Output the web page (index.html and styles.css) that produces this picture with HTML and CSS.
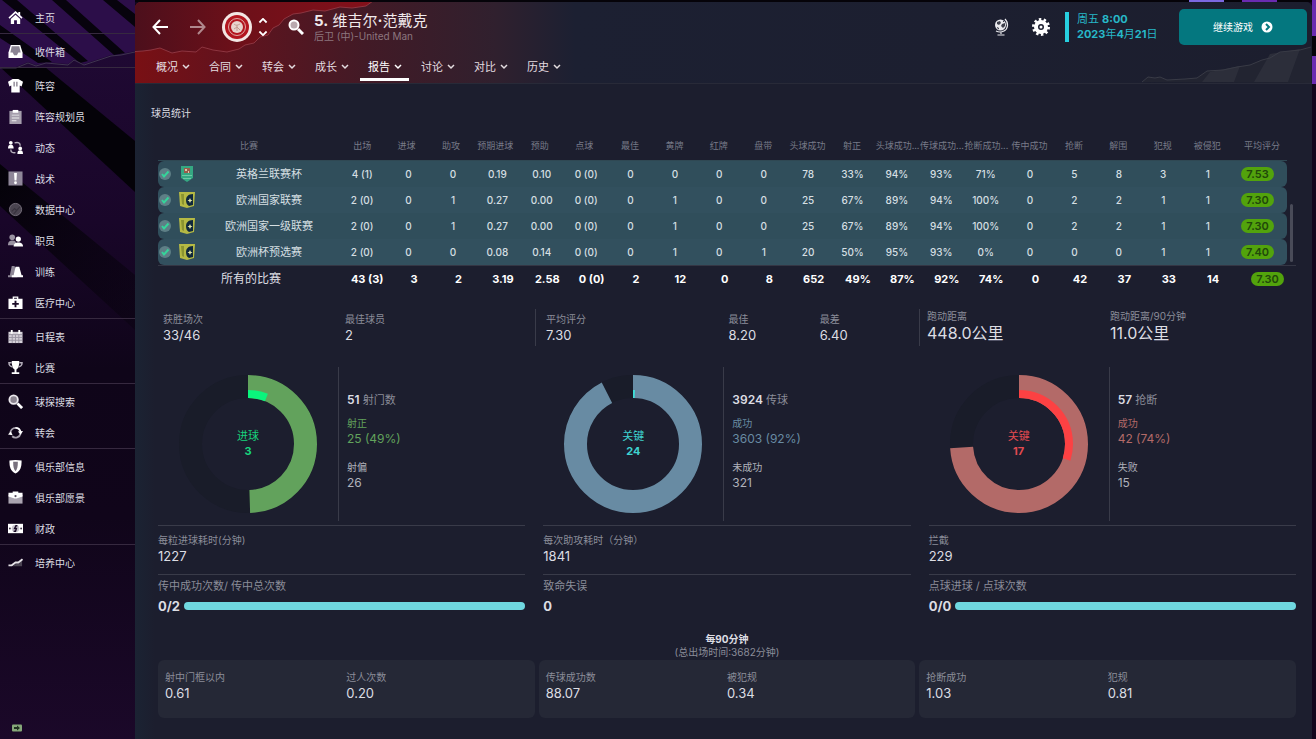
FILE: index.html
```html
<!DOCTYPE html>
<html lang="zh-CN">
<head>
  <meta charset="UTF-8" />
  <title>球员统计</title>
  <link rel="stylesheet" href="styles.css">
</head>
<body>
  <!-- Sidebar -->
  <aside class="sidebar">
    <svg class="sidebar-art" viewBox="0 0 135 739" preserveAspectRatio="none" aria-hidden="true">
      <defs>
        <linearGradient id="side-bg" x1="0" y1="0" x2="0" y2="1">
          <stop offset="0" stop-color="#210a36" />
          <stop offset=".3" stop-color="#190629" />
          <stop offset=".5" stop-color="#0f0519" />
          <stop offset=".7" stop-color="#10051a" />
          <stop offset="1" stop-color="#1b0829" />
        </linearGradient>
        <linearGradient id="side-fade" x1="0" y1="0" x2="1" y2="1">
          <stop offset="0" stop-color="#040208" />
          <stop offset="1" stop-color="#040208" stop-opacity=".3" />
        </linearGradient>
      </defs>
      <path fill="url(#side-bg)" d="M0 0h135v739H0z" />
      <path fill="#2c0e49" d="M0 0h135v51l-14 3-10 1-18 6-9 3-10-5-6 5-22-2-10 3-8-3-12 5H0z" />
      <path fill="#07030d" d="M0 25 52 62 38 63 0 38zM2 0h15l71 61-8 2zM52 0h14l59 53-11 2zM103 0h14l18 14v13z" />
      <path fill="#040208" d="M0 67 45 67 135 141v51z" />
      <path fill="url(#side-fade)" d="M0 164 135 275v55L0 206z" />
      <path fill="none" stroke="#3f3450" stroke-width="1" d="M0 68h16l12-5 8 3 10-3 22 2 6-5 10 5 9-3 18-6 10-1 14-3" />
    </svg>
    <nav class="menu">
      <ul>
        <li><a href="#"><svg viewBox="0 0 16 16"><path d="M8 1 .5 8l1.200 1.200L8 3.400l6.300 5.800L15.500 8 13 5.700V2h-2v1.800z" /><path d="M8 5 3 9.500V15h3.500v-4h3v4H13V9.500z" /></svg>主页</a></li>
      </ul>
      <ul>
        <li><a href="#"><svg viewBox="0 0 16 16"><path d="M3 1h10l2.500 8v6H.5V9z" /><path fill="#8b8494" d="M4 2.500h8L13.500 9H11l-1.500 3h-3L5 9H2.500z" /></svg>收件箱</a></li>
      </ul>
      <ul>
        <li><a href="#"><svg viewBox="0 0 16 16"><path d="M5 1h6l5 3-1.500 5-2-1v7.500h-9V8l-2 1L0 4z" /><path fill="#574d61" d="M6 4h1v5H6zm3 0h1v5H9z" /></svg>阵容</a></li>
        <li><a href="#"><svg viewBox="0 0 16 16"><path fill="#a59eac" d="M1.500 2h13v14h-13z" /><path d="M5 1h6v3H5z" /><path fill="#eee" d="M4 6h8v1H4zm0 3h8v1H4zm0 3h5v1H4z" /></svg>阵容规划员</a></li>
        <li><a href="#"><svg viewBox="0 0 16 16"><circle cx="3" cy="3" r="2" /><path d="M0 9c0-3 1-4 3-4s3 1 3 4z" /><circle cx="13" cy="9" r="2" /><path d="M10 15c0-3 1-4 3-4s3 1 3 4z" /><path class="line" d="M7 3c4-1 6 0 6 3M3 10c0 3 2 4 5 3.500" /></svg>动态</a></li>
        <li><a href="#"><svg viewBox="0 0 16 16"><path fill="#8f8799" d="M.5.500h15v15H.500z" /><path d="M6.500 2h3L9 10H7z" /><circle cx="8" cy="12.500" r="1.500" /></svg>战术</a></li>
        <li><a href="#"><svg viewBox="0 0 16 16"><circle cx="8" cy="8" r="6.500" fill="#4a4450" stroke="#77707d" /><path fill="none" stroke="#37323d" stroke-width="1.200" d="m4 10 3-3 2 2 4-4M6 13l5-6" /></svg>数据中心</a></li>
        <li><a href="#"><svg viewBox="0 0 16 16"><g fill="#9a93a2"><circle cx="4.500" cy="4.500" r="3" /><path d="M0 13c0-4 2-5 5-5s4 2 4 5z" /></g><circle cx="11" cy="6.500" r="2.800" /><path d="M6 14.500C6 11 8 10 11 10s5 1 5 4.500z" /></svg>职员</a></li>
        <li><a href="#"><svg viewBox="0 0 16 16"><path fill="#8e8796" d="M4 2h3l3 12H0v-2h2z" /><path d="M8 3h4l2.500 9H16v2H4v-2h2z" /></svg>训练</a></li>
        <li><a href="#"><svg viewBox="0 0 16 16"><path d="M5 4V1.500h6V4h4.500v11H.5V4zm1.500 0h3V3h-3z" /><path fill="#1a0b26" d="M7 6h2v2.500h2.500v2H9V13H7v-2.500H4.500v-2H7z" /></svg>医疗中心</a></li>
      </ul>
      <ul>
        <li><a href="#"><svg viewBox="0 0 16 16"><path fill="#d4d0d8" d="M.5 3h15v12H.5z" /><path d="M3 1h2v4H3zm8 0h2v4h-2z" /><path fill="none" stroke="#9a94a1" d="M1 6h14M1 9h14M1 12h14M4.500 6v9M8 6v9M11.500 6v9" /></svg>日程表</a></li>
        <li><a href="#"><svg viewBox="0 0 16 16"><path d="M4 1h8c0 5-1 8-3 9v3h3v2H4v-2h3v-3C5 9 4 6 4 1z" /><path class="line" d="M4 3H1c0 3 1 4 4 4.500M12 3h3c0 3-1 4-4 4.500" /></svg>比赛</a></li>
      </ul>
      <ul>
        <li><a href="#"><svg viewBox="0 0 16 16"><circle cx="6" cy="6" r="4.500" fill="#8a838f" stroke="#ece9ee" stroke-width="2" /><path stroke="#fff" stroke-width="3" d="m10 10 5 5" /></svg>球探搜索</a></li>
        <li><a href="#"><svg viewBox="0 0 16 16"><path fill="none" stroke="#a8a2ae" stroke-width="2" d="M2.500 9c0-3 2-6 6-6M13.500 9c-1 4-6 6-9 3" /><path fill="none" stroke="#fff" stroke-width="2" d="M8 3c3 0 5 2 5.500 5" /><path d="m10.500 7 5.500-.5-2.500 4zM0 10l3-3 2 4z" /></svg>转会</a></li>
      </ul>
      <ul>
        <li><a href="#"><svg viewBox="0 0 16 16"><path d="M1.500 1.500 8 1l6.500.500c0 7-1 11-6.500 14C2.500 12.500 1.500 8.500 1.500 1.500z" /><path fill="#77707d" d="M5.500 3h5c0 5-.5 8-2.500 10-2-2-2.500-5-2.500-10z" /></svg>俱乐部信息</a></li>
        <li><a href="#"><svg viewBox="0 0 16 16"><path fill="#aaa4b0" d="M.5 5h15v9.500H.5z" /><path d="M5 3V1.500h6V3h4.500v4L9 9H7L.5 7V3z" /><circle cx="8" cy="6.500" r="1.200" fill="#554c5e" /></svg>俱乐部愿景</a></li>
        <li><a href="#"><svg viewBox="0 0 16 16"><path d="M0 3h16v10H0z" /><circle cx="8" cy="8" r="4" fill="#cac6ce" /><path fill="none" stroke="#1a0b26" stroke-width="1.500" d="M10 5H8.500L7 8h2l-1 3H6" /><circle cx="2" cy="8" r="1" fill="#403548" /><circle cx="14" cy="8" r="1" fill="#403548" /></svg>财政</a></li>
      </ul>
      <ul>
        <li><a href="#"><svg viewBox="0 0 16 16"><path fill="#4a4352" d="M1 12h4l4-3h3l3-4v7z" /><path fill="none" stroke="#e6e3e8" stroke-width="2" d="M.5 11H4l4-3h3l4.500-3.500" /></svg>培养中心</a></li>
      </ul>
    </nav>
    <svg class="cash" viewBox="0 0 10 8"><rect width="10" height="7" y=".5" rx="1" fill="#86a879" /><path fill="#203020" d="M2 3h3V1.500L8 4 5 6.500V5H2z" /></svg>
  </aside>

  <!-- Main panel -->
  <div class="panel">
    <header class="topbar">
      <svg class="tear-left" viewBox="0 0 240 54" aria-hidden="true">
        <defs>
          <linearGradient id="tear" x1="0" y1="0" x2="1" y2="0">
            <stop offset="0" stop-color="#4a0f1c" />
            <stop offset=".45" stop-color="#6d1019" />
            <stop offset="1" stop-color="#84101a" />
          </linearGradient>
        </defs>
        <path fill="url(#tear)" stroke="#8d3540" d="M-1-1h239l-7 5-14 2-12-1-15 4-12-1-12 3-8 1-9 5-5 6-6 3-5 7-8 2-6 6-9 2-6 4-12 3-14-2-11-3-6 5-14-1-10 2-12-5-9 2-8 1-15 1z" />
      </svg>
      <svg class="tear-right" viewBox="0 0 170 38" aria-hidden="true">
        <path fill="#222431" d="M0 37l6-5 7 1 5-1 7 3 18-1 12-1 10-7 16-1 14-3 13-2 12-5 8-2 10-6 20-2 11-3v36z" />
        <path fill="#2c2e3a" d="M60 37 68 27 98 21 92 37zM112 37 128 9 158 4 146 37z" />
        <path fill="none" stroke="#393b46" d="M0 37l6-5 7 1 5-1 7 3 18-1 12-1 10-7 16-1 14-3 13-2 12-5 8-2 10-6 20-2 11-3" />
      </svg>
      <div class="title-row">
        <button class="icon-button back" aria-label="后退"><svg viewBox="0 0 16 16"><path d="M8 1 1.500 8 8 15M2 8h14" /></svg></button>
        <button class="icon-button forward" aria-label="前进"><svg viewBox="0 0 16 16"><path d="m8 1 6.500 7L8 15M14 8H0" /></svg></button>
        <svg class="club" viewBox="0 0 30 30"><circle cx="15" cy="15" r="15" fill="#f3e7e4" /><circle cx="15" cy="15" r="12" fill="#b3161f" /><circle cx="15" cy="15" r="8.500" fill="none" stroke="#e0a9a5" /><circle cx="15" cy="15" r="6" fill="#e8d4cd" /><path fill="none" stroke="#c39a90" d="M12 12c2 2 4 1 6 0M15 13v6M12 17l3-2 3 3" /></svg>
        <button class="stepper" aria-label="切换球员"><svg viewBox="0 0 10 20"><path d="m1 5 4-4 4 4M1 15l4 4 4-4" /></svg></button>
        <button class="search" aria-label="搜索"><svg viewBox="0 0 16 16"><circle cx="6" cy="6" r="4.500" fill="#b9a9ae" stroke="#fff" stroke-width="2" /><path stroke="#fff" stroke-width="3" d="m10 10 5 5" /></svg></button>
        <div class="player">
          <h1><b>5.</b> 维吉尔<b>·</b>范戴克</h1>
          <p>后卫 (中)-United Man</p>
        </div>
        <button class="tool" aria-label="世界"><svg viewBox="0 0 16 18"><circle cx="7.500" cy="7" r="5.500" fill="#e9e9ed" /><path fill="#3d3f4b" d="m4 4 3-1 1 2-2 2-2-1zM9 6l3-1v3l-2 2-2-2zM4 9l2 1v1.500L4 10zM10 3h1v1h-1z" /><path fill="none" stroke="#e9e9ed" stroke-width="1.200" d="M12 1c4 4 3 10-1 12s-6 1-8 0M8 13.500V16M4.500 17h7" /></svg></button>
        <button class="tool gear" aria-label="设置"><svg viewBox="-9 -9 18 18"><circle r="5" fill="none" stroke="#fff" stroke-width="4" /><circle r="7.500" fill="none" stroke="#fff" stroke-width="3" stroke-dasharray="2.360" /><circle r="1.500" fill="#fff" /></svg></button>
        <div class="date">
          <span>周五 <b>8:00</b></span>
          <span><b>2023</b>年<b>4</b>月<b>21</b>日</span>
        </div>
        <button class="continue">继续游戏 <svg viewBox="0 0 12 12"><circle cx="6" cy="6" r="5.500" fill="#fff" /><path fill="none" stroke="#04777f" stroke-width="2" d="m5 3 3 3-3 3" /></svg></button>
      </div>
      <nav class="tabs">
        <a href="#">概况 <svg viewBox="0 0 8 8"><path d="m1 2 3 3 3-3" /></svg></a>
        <a href="#">合同 <svg viewBox="0 0 8 8"><path d="m1 2 3 3 3-3" /></svg></a>
        <a href="#">转会 <svg viewBox="0 0 8 8"><path d="m1 2 3 3 3-3" /></svg></a>
        <a href="#">成长 <svg viewBox="0 0 8 8"><path d="m1 2 3 3 3-3" /></svg></a>
        <a href="#" class="active">报告 <svg viewBox="0 0 8 8"><path d="m1 2 3 3 3-3" /></svg></a>
        <a href="#">讨论 <svg viewBox="0 0 8 8"><path d="m1 2 3 3 3-3" /></svg></a>
        <a href="#">对比 <svg viewBox="0 0 8 8"><path d="m1 2 3 3 3-3" /></svg></a>
        <a href="#">历史 <svg viewBox="0 0 8 8"><path d="m1 2 3 3 3-3" /></svg></a>
      </nav>
    </header>

    <main class="content">
      <h2>球员统计</h2>

      <!-- Shared row icons -->
      <svg class="symbols" aria-hidden="true">
        <symbol id="check" viewBox="0 0 12 12"><circle cx="6" cy="6" r="6" fill="#5e7f86" /><path fill="none" stroke="#35d49a" stroke-width="2" d="m3 6 2 2.500 4.500-5" /></symbol>
        <symbol id="cup" viewBox="0 0 16 16"><path fill="#35a882" d="M2 0h12v12l-6 4-6-4z" /><path fill="#9b5b4b" d="M5 2h6v5H5z" /><path fill="#d9c9a8" d="M6 3h2v2H6zm3 2h1v2H9z" /><path fill="none" stroke="#6cc9a5" d="M3 9.500h10M4 12.500h8" /></symbol>
        <symbol id="euro" viewBox="0 0 16 16"><path fill="#b5b944" d="M0 0h16l-1 14-7 2-7-2z" /><path fill="#8b9430" d="M2 2h3v11l-2-1z" /><path fill="#10283c" d="M14 2C9 2 7 5 7 8s1 5 3 6l4-1z" /><path fill="#e4e8a8" d="m11 6 .8 1.700 1.700.8-1.700.8L11 11l-.8-1.700-1.700-.8 1.700-.8z" /></symbol>
      </svg>

      <div class="stats-table">
        <table>
          <colgroup><col class="col-name"><col span="20"><col class="col-rating"></colgroup>
          <thead>
            <tr><th>比赛</th><th>出场</th><th>进球</th><th>助攻</th><th>预期进球</th><th>预助</th><th>点球</th><th>最佳</th><th>黄牌</th><th>红牌</th><th>盘带</th><th>头球成功</th><th>射正</th><th>头球成功...</th><th>传球成功...</th><th>抢断成功...</th><th>传中成功</th><th>抢断</th><th>解围</th><th>犯规</th><th>被侵犯</th><th>平均评分</th></tr>
          </thead>
          <tbody>
            <tr><td><div class="competition"><svg class="check"><use href="#check" /></svg><svg class="crest"><use href="#cup" /></svg><span>英格兰联赛杯</span></div></td><td>4 (1)</td><td>0</td><td>0</td><td>0.19</td><td>0.10</td><td>0 (0)</td><td>0</td><td>0</td><td>0</td><td>0</td><td>78</td><td>33%</td><td>94%</td><td>93%</td><td>71%</td><td>0</td><td>5</td><td>8</td><td>3</td><td>1</td><td><span class="rating">7.53</span></td></tr>
            <tr><td><div class="competition"><svg class="check"><use href="#check" /></svg><svg class="crest"><use href="#euro" /></svg><span>欧洲国家联赛</span></div></td><td>2 (0)</td><td>0</td><td>1</td><td>0.27</td><td>0.00</td><td>0 (0)</td><td>0</td><td>1</td><td>0</td><td>0</td><td>25</td><td>67%</td><td>89%</td><td>94%</td><td>100%</td><td>0</td><td>2</td><td>2</td><td>1</td><td>1</td><td><span class="rating">7.30</span></td></tr>
            <tr><td><div class="competition"><svg class="check"><use href="#check" /></svg><svg class="crest"><use href="#euro" /></svg><span>欧洲国家一级联赛</span></div></td><td>2 (0)</td><td>0</td><td>1</td><td>0.27</td><td>0.00</td><td>0 (0)</td><td>0</td><td>1</td><td>0</td><td>0</td><td>25</td><td>67%</td><td>89%</td><td>94%</td><td>100%</td><td>0</td><td>2</td><td>2</td><td>1</td><td>1</td><td><span class="rating">7.30</span></td></tr>
            <tr><td><div class="competition"><svg class="check"><use href="#check" /></svg><svg class="crest"><use href="#euro" /></svg><span>欧洲杯预选赛</span></div></td><td>2 (0)</td><td>0</td><td>0</td><td>0.08</td><td>0.14</td><td>0 (0)</td><td>0</td><td>1</td><td>0</td><td>1</td><td>20</td><td>50%</td><td>95%</td><td>93%</td><td>0%</td><td>0</td><td>0</td><td>0</td><td>1</td><td>1</td><td><span class="rating">7.40</span></td></tr>
          </tbody>
          <tfoot>
            <tr><th>所有的比赛</th><td>43 (3)</td><td>3</td><td>2</td><td>3.19</td><td>2.58</td><td>0 (0)</td><td>2</td><td>12</td><td>0</td><td>8</td><td>652</td><td>49%</td><td>87%</td><td>92%</td><td>74%</td><td>0</td><td>42</td><td>37</td><td>33</td><td>14</td><td><span class="rating">7.30</span></td></tr>
          </tfoot>
        </table>
        <div class="scrollbar"><span></span></div>
      </div>

      <section class="summary">
        <dl>
          <div><dt>获胜场次</dt><dd>33/46</dd></div>
          <div><dt>最佳球员</dt><dd>2</dd></div>
        </dl>
        <dl class="ratings">
          <div><dt>平均评分</dt><dd>7.30</dd></div>
          <div><dt>最佳</dt><dd>8.20</dd></div>
          <div><dt>最差</dt><dd>6.40</dd></div>
        </dl>
        <dl class="distance">
          <div><dt>跑动距离</dt><dd>448.0公里</dd></div>
          <div><dt>跑动距离/90分钟</dt><dd>11.0公里</dd></div>
        </dl>
      </section>

      <section class="columns">
        <article class="shots">
          <div class="chart">
            <div class="donut">
              <svg viewBox="0 0 138 138">
                <circle class="track" cx="69" cy="69" r="57.500" />
                <circle class="arc" cx="69" cy="69" r="57.500" pathLength="100" stroke-dasharray="49.500 100" />
                <circle class="key" cx="69" cy="69" r="50" pathLength="100" stroke-dasharray="6 100" />
              </svg>
              <p>进球<b>3</b></p>
            </div>
            <div class="legend">
              <p><b>51</b> 射门数</p>
              <dl class="hit"><dt>射正</dt><dd>25 (49%)</dd></dl>
              <dl><dt>射偏</dt><dd>26</dd></dl>
            </div>
          </div>
          <dl class="fact"><dt>每粒进球耗时(分钟)</dt><dd>1227</dd></dl>
          <dl class="fact ratio"><dt>传中成功次数/ 传中总次数</dt><dd>0/2<span class="bar"></span></dd></dl>
        </article>
        <article class="passes">
          <div class="chart">
            <div class="donut">
              <svg viewBox="0 0 138 138">
                <circle class="track" cx="69" cy="69" r="57.500" />
                <circle class="arc" cx="69" cy="69" r="57.500" pathLength="100" stroke-dasharray="92.500 100" />
                <circle class="key" cx="69" cy="69" r="50" pathLength="100" stroke-dasharray=".6 100" />
              </svg>
              <p>关键<b>24</b></p>
            </div>
            <div class="legend">
              <p><b>3924</b> 传球</p>
              <dl class="hit"><dt>成功</dt><dd>3603 (92%)</dd></dl>
              <dl><dt>未成功</dt><dd>321</dd></dl>
            </div>
          </div>
          <dl class="fact"><dt>每次助攻耗时（分钟）</dt><dd>1841</dd></dl>
          <dl class="fact ratio"><dt>致命失误</dt><dd>0</dd></dl>
        </article>
        <article class="tackles">
          <div class="chart">
            <div class="donut">
              <svg viewBox="0 0 138 138">
                <circle class="track" cx="69" cy="69" r="57.500" />
                <circle class="arc" cx="69" cy="69" r="57.500" pathLength="100" stroke-dasharray="74 100" />
                <circle class="key" cx="69" cy="69" r="50" pathLength="100" stroke-dasharray="30 100" />
              </svg>
              <p>关键<b>17</b></p>
            </div>
            <div class="legend">
              <p><b>57</b> 抢断</p>
              <dl class="hit"><dt>成功</dt><dd>42 (74%)</dd></dl>
              <dl><dt>失败</dt><dd>15</dd></dl>
            </div>
          </div>
          <dl class="fact"><dt>拦截</dt><dd>229</dd></dl>
          <dl class="fact ratio"><dt>点球进球 / 点球次数</dt><dd>0/0<span class="bar"></span></dd></dl>
        </article>
      </section>

      <section class="per90">
        <h3>每90分钟</h3>
        <p>(总出场时间:3682分钟)</p>
        <div class="cards">
          <dl>
            <div><dt>射中门框以内</dt><dd>0.61</dd></div>
            <div><dt>过人次数</dt><dd>0.20</dd></div>
          </dl>
          <dl>
            <div><dt>传球成功数</dt><dd>88.07</dd></div>
            <div><dt>被犯规</dt><dd>0.34</dd></div>
          </dl>
          <dl>
            <div><dt>抢断成功</dt><dd>1.03</dd></div>
            <div><dt>犯规</dt><dd>0.81</dd></div>
          </dl>
        </div>
      </section>
    </main>
  </div>
</body>
</html>
```

FILE: styles.css
```css
/* Basic reset */
* {
  box-sizing: border-box;
}
body, h1, h2, h3, p, ul, dl, dd {
  margin: 0;
  padding: 0;
}
body {
  display: grid;
  grid-template-columns: 135px 1fr;
  min-height: 100vh;
  padding-right: 4px;
  background-color: #12061c;
  background-image:
    linear-gradient(to right, #050309 18px, #7b68e0 18px),
    linear-gradient(to right, #050309 18px, #6a2bb0 18px),
    linear-gradient(to bottom, #6a2bb0 36px, #050309 36px, #050309 56px, #6a2bb0 56px),
    linear-gradient(#050309, #050309);
  background-size: 53px 2px, 53px 2px, 4px 84px, 100% 2px;
  background-position: right 92px top, right 39px top, right top, left top;
  background-repeat: no-repeat;
  color: #dcdde3;
  font-family: Inter, "Noto Sans CJK SC", sans-serif;
  font-size: 10px;
  line-height: 16px;
}
h1, h2, h3 {
  font-weight: normal;
}
button {
  padding: 0;
  border: none;
  background: none;
  font-family: inherit;
  color: #fff;
  cursor: pointer;
}
a {
  color: inherit;
  text-decoration: none;
}
svg {
  display: block;
}

/* Sidebar */
.sidebar {
  position: relative;
  display: flex;
  flex-direction: column;
  justify-content: space-between;
}
.sidebar-art {
  position: absolute;
  width: 100%;
  height: 100%;
}
.menu {
  position: relative;
}
.menu ul {
  padding-top: 2px;
  border-bottom: 1px solid #36293f;
  list-style: none;
}
.menu ul:last-child {
  border-bottom: none;
}
.menu a {
  display: flex;
  align-items: center;
  gap: 12px;
  height: 31px;
  padding-left: 8px;
}
.menu svg {
  width: 15px;
  height: 15px;
  fill: #fff;
}
.menu .line {
  fill: none;
  stroke: #b5afbb;
  stroke-width: 1.5;
}
.cash {
  position: relative;
  width: 10px;
  height: 8px;
  margin: 0 0 7px 12px;
}

/* Main panel */
.panel {
  margin-top: 2px;
  border-radius: 6px 6px 0 0;
  background: linear-gradient(to right, #1b2333 0, #1c1e2e 20px);
  overflow: hidden;
}
.topbar {
  position: relative;
  height: 82px;
  border-bottom: 1px solid #282a38;
  background: linear-gradient(to right, #791014 0, #65121c 80px, #421a26 230px, #30202e 360px, #1c2032 440px, #1c1e2e 100%);
}
.tear-left {
  position: absolute;
  top: 0;
  left: 0;
  width: 240px;
  height: 54px;
}
.tear-right {
  position: absolute;
  right: 0;
  bottom: 0;
  width: 170px;
  height: 38px;
}
.title-row {
  position: relative;
  display: flex;
  align-items: center;
  height: 49px;
  padding: 0 5px 0 17px;
}
.icon-button svg {
  width: 16px;
  height: 16px;
  fill: none;
  stroke: #fff;
  stroke-width: 2;
}
.forward {
  margin-left: 22px;
  opacity: 0.5;
}
.club {
  width: 30px;
  height: 30px;
  margin-left: 16px;
}
.stepper {
  margin-left: 6px;
}
.stepper svg {
  width: 10px;
  height: 18px;
  fill: none;
  stroke: #fff;
  stroke-width: 2;
}
.search {
  margin-left: 20px;
}
.search svg {
  width: 16px;
  height: 16px;
}
.player {
  flex: 1;
  margin-left: 10px;
}
.player h1 {
  font-size: 15px;
  line-height: 18px;
  color: #f0e9eb;
}
.player p {
  line-height: 12px;
  color: #8c767f;
}
.tool svg {
  width: 16px;
  height: 18px;
}
.gear {
  margin: 0 15px 0 23px;
}
.gear svg {
  width: 18px;
}
.date {
  display: flex;
  flex-direction: column;
  width: 114px;
  padding-left: 8px;
  border-left: 4px solid #27cfe0;
  font-size: 11px;
  line-height: 15px;
  color: #27b8c8;
}
.continue {
  display: flex;
  align-items: center;
  justify-content: center;
  gap: 8px;
  width: 128px;
  height: 36px;
  border-radius: 5px;
  background: #04777f;
  font-size: 10px;
}
.continue svg {
  width: 12px;
  height: 12px;
}
.tabs {
  position: relative;
  display: flex;
  gap: 4px;
  padding-left: 13px;
}
.tabs a {
  display: flex;
  align-items: center;
  gap: 4px;
  height: 30px;
  padding: 5px 7px 0 8px;
  border-bottom: 3px solid transparent;
  font-size: 11px;
  color: #e4dde0;
}
.tabs .active {
  border-color: #fff;
  color: #fff;
}
.tabs svg {
  width: 8px;
  height: 8px;
  fill: none;
  stroke: currentColor;
  stroke-width: 1.5;
}

/* Content */
.content {
  padding: 20px 16px 20px 23px;
}
.content h2 {
  margin-left: -7px;
  font-size: 10px;
  line-height: 18px;
}
.symbols {
  width: 0;
  height: 0;
}
dt {
  color: #8b8d99;
}
dd {
  font-size: 13px;
}

/* Statistics table */
.stats-table {
  display: flex;
  margin-top: 9px;
}
.stats-table table {
  flex: 1;
  width: 0;
  table-layout: fixed;
  border-collapse: separate;
  border-spacing: 0;
}
.col-name {
  width: 182px;
}
.col-rating {
  width: 59px;
}
.stats-table th,
.stats-table td {
  height: 26px;
  padding: 0;
  text-align: center;
  white-space: nowrap;
}
.stats-table thead th {
  height: 30px;
  border-bottom: 1px solid #2f4853;
  font-size: 9px;
  font-weight: normal;
  color: #777a88;
}
.stats-table thead th:nth-child(n+8) {
  padding-left: 3px;
}
.stats-table thead th:last-child {
  padding-left: 9px;
}
.stats-table tbody td {
  background: #304e5b;
  font-weight: 500;
  color: #d5dfe2;
}
.stats-table tbody td:nth-child(n+3) {
  padding-left: 4px;
}
.stats-table tbody tr:nth-child(even) td {
  background: #32505e;
}
.stats-table tbody td:first-child {
  border-radius: 6px 0 0 6px;
}
.stats-table tbody td:last-child {
  padding-left: 0;
  border-radius: 0 6px 6px 0;
}
.competition {
  display: flex;
  align-items: center;
  font-size: 11px;
  font-weight: normal;
}
.competition span {
  flex: 1;
}
.check {
  width: 12px;
  height: 12px;
  margin: 0 8px 0 1px;
}
.crest {
  width: 16px;
  height: 16px;
  margin-right: 3px;
}
.stats-table tfoot th,
.stats-table tfoot td {
  border-top: 1px solid #343644;
}
.stats-table tfoot th {
  padding-left: 4px;
  font-size: 12px;
  font-weight: normal;
}
.stats-table tfoot td {
  padding-left: 10px;
  font-size: 11px;
  font-weight: bold;
  color: #fff;
}
.stats-table tfoot td:nth-child(n+3) {
  padding-left: 15px;
}
.stats-table tfoot td:last-child {
  padding-left: 20px;
}
.rating {
  display: inline-block;
  width: 33px;
  border-radius: 7px;
  background: #52a30c;
  font-size: 11px;
  font-weight: 600;
  line-height: 14px;
  color: #21480a;
}
.scrollbar {
  width: 9px;
  height: 105px;
  margin-top: 30px;
  padding: 43px 3px 3px;
  border-bottom: 1px solid #343644;
}
.scrollbar span {
  display: block;
  height: 100%;
  border-radius: 2px;
  background: #494b58;
}

/* Summary line */
.summary {
  display: grid;
  grid-template-columns: 377fr 384fr 377fr;
  margin-top: 18px;
}
.summary dl {
  display: grid;
  grid-template-columns: 1fr 1fr;
  height: 37px;
  padding: 2px 8px 0 5px;
}
.summary .ratings {
  grid-template-columns: 2fr 1fr 1fr;
  padding-left: 10px;
  border-left: 1px solid #393b49;
}
.summary .distance {
  padding: 0 3px 0 7px;
  border-left: 1px solid #393b49;
}
.distance dt {
  line-height: 14px;
}
.distance dd {
  font-size: 16px;
  line-height: 20px;
}

/* Chart columns */
.columns {
  display: grid;
  grid-template-columns: repeat(3, 1fr);
  gap: 18px;
  margin-top: 21px;
}
.shots {
  --main: #62a25c;
  --key: #0af57c;
  --label: #18d47c;
}
.passes {
  --main: #688ba3;
  --key: #3fded8;
  --label: #3fd3d0;
}
.tackles {
  --main: #b36a68;
  --key: #fc4143;
  --label: #e24a50;
}
.chart {
  display: grid;
  grid-template-columns: 180px 1fr;
  height: 154px;
}
.donut {
  display: grid;
  place-items: center;
}
.donut svg,
.donut p {
  grid-area: 1 / 1;
}
.donut svg {
  width: 138px;
  height: 138px;
  fill: none;
  transform: rotate(-90deg);
}
.track {
  stroke: #191c29;
  stroke-width: 23;
}
.arc {
  stroke: var(--main);
  stroke-width: 23;
}
.key {
  stroke: var(--key);
  stroke-width: 8;
}
.donut p {
  display: flex;
  flex-direction: column;
  font-size: 11px;
  line-height: 15px;
  text-align: center;
  color: var(--label);
}
.legend {
  padding: 25px 0 0 8px;
  border-left: 1px solid #393b49;
}
.legend p {
  font-size: 11px;
  color: #8b8d99;
}
.legend b {
  font-size: 12px;
  font-weight: 600;
  color: #dcdde3;
}
.legend dl {
  margin-top: 12px;
}
.legend dt {
  color: #b0b2bb;
}
.legend dd {
  font-size: 12px;
  color: #b0b2bb;
}
.legend .hit {
  margin-top: 7px;
}
.legend .hit dt,
.legend .hit dd {
  color: var(--main);
}
.fact {
  margin-top: 4px;
  padding: 6px 0 10px;
  border-top: 1px solid #393b49;
}
.ratio {
  margin-top: 0;
  padding: 3px 0 0;
  font-size: 11px;
}
.ratio dd {
  display: flex;
  align-items: center;
  gap: 4px;
  margin-top: 4px;
  font-weight: bold;
}
.bar {
  flex: 1;
  height: 8px;
  border-radius: 4px;
  background: #6fd8e0;
}

/* Per 90 minutes */
.per90 {
  margin-top: 19px;
  text-align: center;
}
.per90 h3 {
  font-size: 10px;
  font-weight: bold;
  line-height: 13px;
}
.per90 p {
  line-height: 13px;
  color: #8b8d99;
}
.cards {
  display: grid;
  grid-template-columns: repeat(3, 1fr);
  gap: 4px;
  margin-top: 1px;
  text-align: left;
}
.cards dl {
  display: grid;
  grid-template-columns: 1fr 1fr;
  padding: 9px 7px 17px;
  border-radius: 6px;
  background: #252836;
}
```
